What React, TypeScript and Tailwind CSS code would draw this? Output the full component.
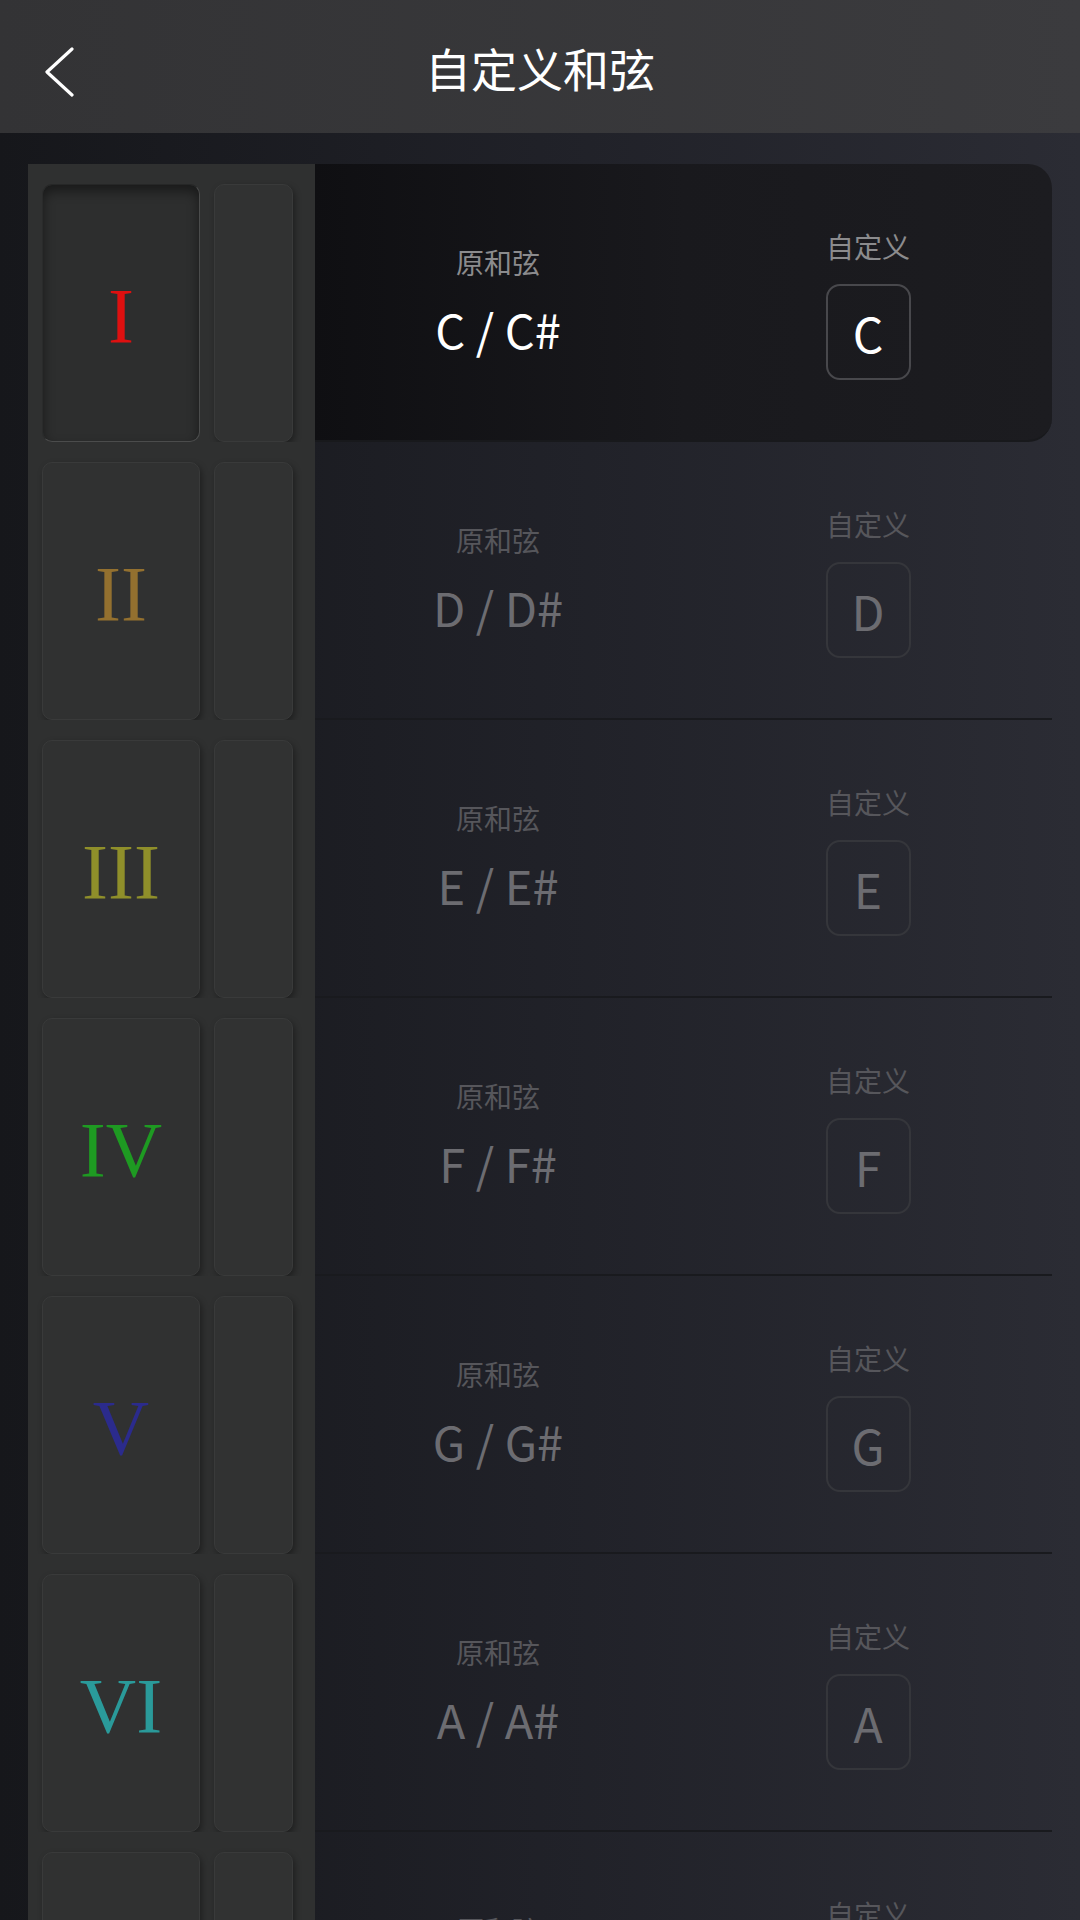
import React from 'react';

const FONT = { fontFamily: '"Noto Sans CJK SC", "Noto Sans", sans-serif' };
const SERIF = { fontFamily: '"Liberation Serif", "DejaVu Serif", serif' };

const chords = [
  { roman: 'I', color: 'text-[#de1010]', orig: 'C / C#', custom: 'C' },
  { roman: 'II', color: 'text-[#93702f]', orig: 'D / D#', custom: 'D' },
  { roman: 'III', color: 'text-[#8f8f2a]', orig: 'E / E#', custom: 'E' },
  { roman: 'IV', color: 'text-[#1e9a22]', orig: 'F / F#', custom: 'F' },
  { roman: 'V', color: 'text-[#2b2b8c]', orig: 'G / G#', custom: 'G' },
  { roman: 'VI', color: 'text-[#2a9a9a]', orig: 'A / A#', custom: 'A' },
  { roman: 'VII', color: 'text-[#8a3a9a]', orig: 'B / B#', custom: 'B' },
];

function ChordRow({ chord, active }: { chord: (typeof chords)[number]; active: boolean }) {
  return (
    <div className="flex h-[278px] shrink-0">
      <div className="flex w-[287px] shrink-0 gap-[14px] bg-[#2f3030] pl-[14px] pt-[20px]">
        <div
          className={
            active
              ? 'flex w-[158px] items-center justify-center rounded-[10px] border border-t-[#262727] border-l-[#2a2b2b] border-r-[#4b4c4c] border-b-[#4b4c4c] bg-[#2d2e2e] shadow-[inset_0_6px_12px_rgba(0,0,0,0.45)]'
              : 'flex w-[158px] items-center justify-center rounded-[10px] border border-[#393a3a] bg-[#303131] shadow-[2px_3px_6px_rgba(0,0,0,0.35)]'
          }
        >
          <span className={`mt-[6px] text-[78px] leading-none ${chord.color}`} style={SERIF}>
            {chord.roman}
          </span>
        </div>
        <div className="w-[79px] rounded-[10px] border border-[#393a3a] bg-[#313232] shadow-[2px_3px_6px_rgba(0,0,0,0.35)]" />
      </div>
      <div
        className={
          active
            ? 'flex flex-1 rounded-r-[24px] border-b-2 border-[#18191c] bg-gradient-to-r from-[#0f0f12] via-[#19191d] to-[#1c1c20] pl-[63px]'
            : 'flex flex-1 border-b-2 border-[#191a1e] pl-[63px]'
        }
      >
        <div className="flex w-[240px] flex-col items-center pt-[81px]">
          <span
            className={`text-[28px] leading-[34px] ${active ? 'text-[#8b8b8d]' : 'text-[#56565b]'}`}
          >
            原和弦
          </span>
          <span
            className={`mt-[20px] text-[47px] leading-[60px] ${active ? 'text-white' : 'text-[#6c6c71]'}`}
          >
            {chord.orig}
          </span>
        </div>
        <div className="ml-[150px] flex w-[200px] flex-col items-center pt-[65px]">
          <span
            className={`text-[28px] leading-[34px] ${active ? 'text-[#8b8b8d]' : 'text-[#56565b]'}`}
          >
            自定义
          </span>
          <div
            className={`mt-[21px] flex h-[96px] w-[85px] items-center justify-center rounded-[14px] border-2 ${
              active ? 'border-[#48484c]' : 'border-[#35363b]'
            }`}
          >
            <span className={`text-[48px] leading-[60px] ${active ? 'text-white' : 'text-[#6c6c71]'}`}>
              {chord.custom}
            </span>
          </div>
        </div>
      </div>
    </div>
  );
}

export default function App() {
  return (
    <div className="flex h-[1920px] w-[1080px] flex-col overflow-hidden bg-[#1e1f25]" style={FONT}>
      <header className="relative flex h-[133px] shrink-0 items-center justify-center bg-gradient-to-r from-[#333335] to-[#3b3b3e]">
        <svg
          className="absolute left-[44px] top-[47px]"
          width="32"
          height="50"
          viewBox="0 0 32 50"
          fill="none"
          stroke="white"
          strokeWidth="3.2"
          strokeLinecap="round"
          strokeLinejoin="round"
        >
          <path d="M28 2 L3 25 L28 48" />
        </svg>
        <h1 className="text-[46px] font-normal leading-none text-white">自定义和弦</h1>
      </header>
      <main className="flex-1 bg-gradient-to-r from-[#16171b] via-[#202128] to-[#2b2c34] px-[28px] pt-[31px]">
        <div className="flex flex-col">
          {chords.map((c, i) => (
            <ChordRow key={c.roman} chord={c} active={i === 0} />
          ))}
        </div>
      </main>
    </div>
  );
}
